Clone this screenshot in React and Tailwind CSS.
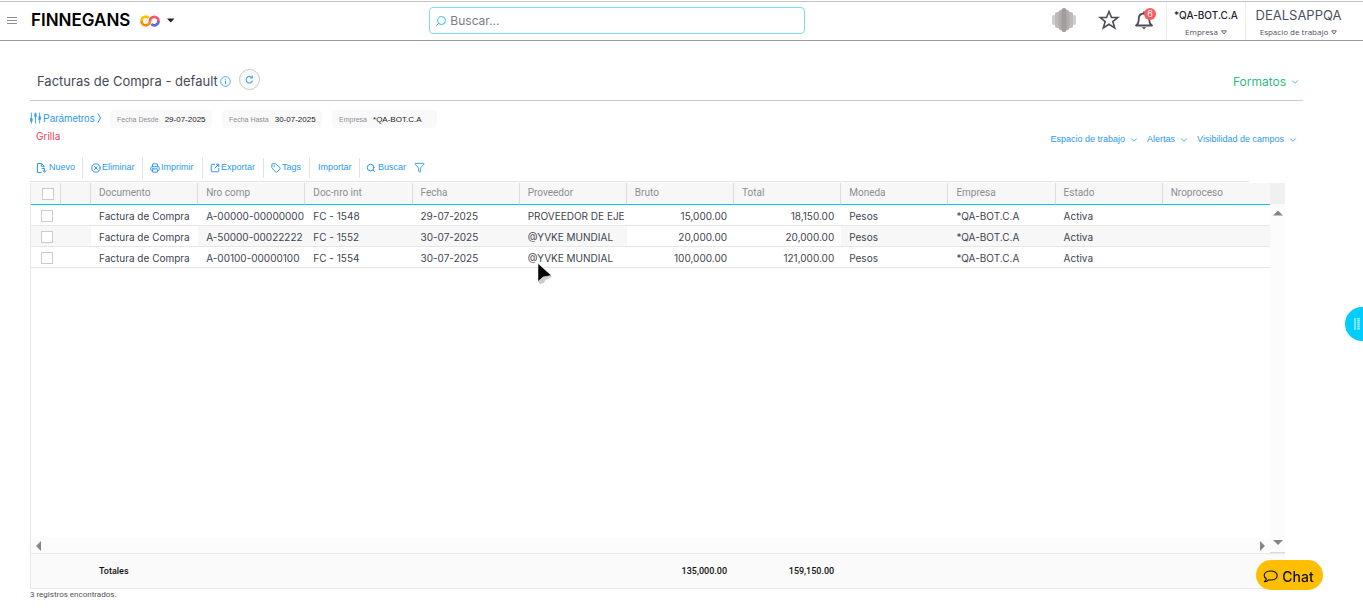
import { ChevronDown, Tag, Filter, Search, Printer, CircleX, SquareArrowOutUpRight } from "lucide-react";

const inter = "font-['Inter','Liberation_Sans',sans-serif]";
const arial = "font-['Liberation_Sans',Arial,sans-serif]";

const columns = ["Documento", "Nro comp", "Doc-nro int", "Fecha", "Proveedor", "Bruto", "Total", "Moneda", "Empresa", "Estado", "Nroproceso"];

const rows = [
  ["Factura de Compra", "A-00000-00000000", "FC - 1548", "29-07-2025", "PROVEEDOR DE EJE", "15,000.00", "18,150.00", "Pesos", "*QA-BOT.C.A", "Activa", ""],
  ["Factura de Compra", "A-50000-00022222", "FC - 1552", "30-07-2025", "@YVKE MUNDIAL", "20,000.00", "20,000.00", "Pesos", "*QA-BOT.C.A", "Activa", ""],
  ["Factura de Compra", "A-00100-00000100", "FC - 1554", "30-07-2025", "@YVKE MUNDIAL", "100,000.00", "121,000.00", "Pesos", "*QA-BOT.C.A", "Activa", ""],
];

const totals = ["Totales", "", "", "", "", "135,000.00", "159,150.00", "", "", "", ""];
const isAmount = (i) => i === 5 || i === 6;
const isPlain = (i) => i === 0 || isAmount(i);

function Columns() {
  return (
    <colgroup>
      <col className="w-[30px]" />
      <col className="w-[30px]" />
      {columns.map((c) => <col key={c} />)}
    </colgroup>
  );
}

function Check({ label }) {
  return <input type="checkbox" aria-label={label} className="block size-3 appearance-none border border-[#c9cbd0] bg-white" />;
}

function Logo() {
  return (
    <svg viewBox="0 0 40 24" className="h-3 w-5" fill="none" strokeWidth="5.500" aria-hidden="true">
      <path d="M17.500 6A8.500 8.500 0 0 0 3 12" stroke="#ffc400" />
      <path d="M3 12A8.500 8.500 0 0 0 20 12" stroke="#ff8a00" />
      <path d="M20 12A8.500 8.500 0 0 1 37 12" stroke="#f4596b" />
      <path d="M37 12A8.500 8.500 0 0 1 22.500 18" stroke="#6467d8" />
    </svg>
  );
}

function Avatar() {
  return (
    <svg viewBox="0 0 24 24" className="size-6" aria-hidden="true">
      <rect x="0" y="7" width="4.500" height="10" rx="2.200" fill="#cfcdcc" />
      <rect x="19.500" y="7" width="4.500" height="10" rx="2.200" fill="#cfcdcc" />
      <rect x="3" y="4" width="5" height="16" rx="2.500" fill="#bdbab9" />
      <rect x="16" y="4" width="5" height="16" rx="2.500" fill="#bdbab9" />
      <rect x="6.500" y="2" width="5" height="20" rx="2.500" fill="#b0adac" />
      <rect x="12.500" y="2" width="5" height="20" rx="2.500" fill="#b0adac" />
      <rect x="9.500" y="0" width="5" height="24" rx="2.500" fill="#a19e9d" />
    </svg>
  );
}

function StarIcon() {
  return (
    <svg viewBox="0 0 22 22" className="size-[22px]" fill="none" stroke="currentColor" strokeWidth="1.600" strokeLinejoin="miter" aria-hidden="true">
      <path d="M11 2.500l2.500 6h6.300l-5 4.100 1.900 6.400L11 15.300 5.300 19l1.900-6.400-5-4.100h6.300z" />
    </svg>
  );
}

function BellIcon() {
  return (
    <svg viewBox="0 0 20 20" className="size-5" fill="none" stroke="currentColor" strokeWidth="1.800" aria-hidden="true">
      <path d="M2 15.500h16c-2-1.500-2.700-2.500-2.700-5V9c0-3.200-2-5.500-5.300-5.500S4.700 5.800 4.700 9v1.500c0 2.500-.7 3.500-2.700 5zM10 1.500v2" strokeLinejoin="round" />
      <path d="M7.800 17.200h4.400L10 19.500z" fill="currentColor" stroke="none" />
    </svg>
  );
}

function InfoIcon() {
  return (
    <svg viewBox="0 0 11 11" className="ml-0.5 size-[11px] text-[#379ff0]" fill="none" stroke="currentColor" aria-hidden="true">
      <circle cx="5.500" cy="5.500" r="4.800" strokeWidth="0.900" />
      <path d="M5.500 4.800v3.400M5.500 2.700v1.100" strokeWidth="1.100" />
    </svg>
  );
}

function RefreshIcon() {
  return (
    <svg viewBox="0 0 10 10" className="size-[9px] text-[#379ff0]" fill="none" stroke="currentColor" strokeWidth="1.200" aria-hidden="true">
      <path d="M8.300 6.300A3.600 3.600 0 1 1 7.200 2.500" />
      <path d="M8.700.3v3.600H5.200z" fill="currentColor" stroke="none" />
    </svg>
  );
}

function NewFileIcon({ className }) {
  return (
    <svg viewBox="0 0 10 10" className={className} fill="none" stroke="currentColor" strokeWidth="1" aria-hidden="true">
      <path d="M4.500 9.500h-4v-9h4l2.500 2.500v1.500M4.300.7V3.300H7" />
      <path d="M4.800 5.500h2.700v3M6 7.300l1.500 2 1.700-2" />
    </svg>
  );
}

function ChatIcon() {
  return (
    <svg viewBox="0 0 15 13" className="h-[13px] w-[15px]" fill="none" stroke="currentColor" strokeWidth="1.200" strokeLinejoin="round" aria-hidden="true">
      <path d="M7.800 1C4 1 1.200 2.900 1.200 5.400c0 1.400.9 2.600 2.200 3.400-.1 1.200-.9 2.200-2 2.900 1.900 0 3.300-.7 4.300-1.900.7.100 1.400.2 2.100.2 3.700 0 6.400-2 6.400-4.600S11.500 1 7.800 1z" />
    </svg>
  );
}

function SmallTriangle() {
  return (
    <svg viewBox="0 0 6 5" className="h-[5px] w-1.5" fill="none" stroke="#555b66" strokeWidth="0.900" aria-hidden="true">
      <path d="M.6.8h4.800L3 4z" />
    </svg>
  );
}

function Sliders() {
  return (
    <svg viewBox="0 0 12 12" className="h-3 w-[11px]" stroke="#379ff0" strokeWidth="1" aria-hidden="true">
      <path d="M1.500 0v12M6 0v12M10.500 0v12" />
      <path d="M1.500 7v2M6 2v2M10.500 5v2" strokeWidth="2.600" strokeLinecap="round" />
    </svg>
  );
}

function Arrow({ d }) {
  return (
    <svg viewBox="0 0 10 10" className="size-2.5" fill="#858585" aria-hidden="true">
      <path d={d} />
    </svg>
  );
}

function Account({ name, label, className }) {
  return (
    <button type="button" className={`flex flex-col items-center border-l border-[#ececec] pt-1.5 ${className}`}>
      {name}
      <span className="mt-[5px] flex items-center gap-[3px] font-['Open_Sans',sans-serif] text-[8px] leading-[10px] font-normal text-[#4b5160]">
        {label}
        <SmallTriangle />
      </span>
    </button>
  );
}

function Header() {
  return (
    <header className="mt-px flex h-10 border-t border-b border-t-[#c4c4c4] border-b-[#9a9aa5] bg-white">
      <div className="flex w-[31.5%] items-center pb-px pl-[7px]">
        <button type="button" aria-label="Menú" className="flex w-2.5 flex-col gap-0.5">
          <span className="h-px bg-[#8c8f98]" />
          <span className="h-px bg-[#8c8f98]" />
          <span className="h-px bg-[#8c8f98]" />
        </button>
        <button type="button" className="ml-3.5 flex items-center text-[17px] font-semibold text-black">
          <span className="w-[109px] text-left">FINNEGANS</span>
          <Logo />
          <svg viewBox="0 0 8 5" className="ml-[7px] h-[5px] w-2" aria-hidden="true"><path d="M0 .5h7.500L3.700 4.500z" fill="#222" /></svg>
        </button>
      </div>
      <div className="mt-[5px] flex h-[27px] w-[376px] items-center gap-[3px] rounded border border-[#7edcf9] px-[5px]">
        <Search className="size-3 -scale-x-100 text-[#2bc3f3]" strokeWidth={2} />
        <input type="text" aria-label="Buscar" placeholder="Buscar..." className="h-5 min-w-0 flex-1 text-[12px] outline-none placeholder:text-[#7a7c86]" />
      </div>
      <div className="flex flex-1 justify-end">
        <div className="flex items-center gap-[22px] pr-3 pb-0.5">
          <Avatar />
          <button type="button" aria-label="Favoritos" className="text-[#4d4d52]"><StarIcon /></button>
          <button type="button" aria-label="Notificaciones" className="relative -ml-2 text-[#4d4d52]">
            <BellIcon />
            <span className="absolute -top-0.5 -right-0.5 flex size-3 items-center justify-center rounded-full bg-[#ff5a5f] text-[9px] text-white">6</span>
          </button>
        </div>
        <Account name={<span className="text-[10px] leading-[14px] font-medium text-[#20242e]">*QA-BOT.C.A</span>} label="Empresa" className="w-[79px]" />
        <Account name={<span className="text-[13px] leading-[14px] text-[#4b5160]">DEALSAPPQA</span>} label="Espacio de trabajo" className="w-[118px] pr-3" />
      </div>
    </header>
  );
}

function Chip({ label, value, className }) {
  return (
    <div className={`flex h-[18px] items-center gap-1.5 rounded-sm bg-[#f9f9f9] pt-0.5 pl-[7px] text-[7px] ${className}`}>
      <span className="text-[#8e8e94]">{label}</span>
      <span className="text-[8px] text-[#222]">{value}</span>
    </div>
  );
}

function MenuLink({ children }) {
  return (
    <button type="button" className="flex items-center gap-1 text-[9px] text-[#2b99ee]">
      {children}
      <ChevronDown className="size-2.5" strokeWidth={2} />
    </button>
  );
}

function Tool({ icon: Icon, children, className }) {
  return (
    <button type="button" className={`flex h-5 items-center border-[#e2e2e2] text-[9px] text-[#2b99ee] ${className}`}>
      {Icon && <Icon className="size-2.5" strokeWidth={2.4} />}
      {children}
    </button>
  );
}

export default function App() {
  return (
    <div className={`flex min-h-screen flex-col bg-white ${inter}`}>
      <Header />
      <main className="flex flex-1 flex-col pr-[60px] pl-[30px]">
        <div className="flex h-[60px] items-center justify-between border-b border-[#c9c9c9] pt-[22px] pl-[7px]">
          <div className="flex items-center">
            <h1 className="text-[13px] text-[#464a58]">Facturas de Compra - default</h1>
            <InfoIcon />
            <button type="button" aria-label="Actualizar" className="mb-1 ml-2 flex size-[21px] items-center justify-center rounded-full border border-[#c9c9c9] bg-[#fafafa]">
              <RefreshIcon />
            </button>
          </div>
          <button type="button" className="flex items-center gap-1 pr-[3px] text-[12px] text-[#31ba84]">
            Formatos
            <ChevronDown className="size-2.5 text-[#379ff0]" strokeWidth={2} />
          </button>
        </div>

        <div className={`mt-[9px] flex h-[18px] items-center ${arial}`}>
          <button type="button" className="flex w-20 items-center gap-0.5 pb-0.5 text-[10px] text-[#2b99ee]">
            <Sliders />
            Parámetros
            <svg viewBox="0 0 5 10" className="h-2.5 w-[5px]" fill="none" stroke="currentColor" aria-hidden="true"><path d="M1 .5l2.500 4.500L1 9.500" /></svg>
          </button>
          <div className="flex gap-2.5">
            <Chip label="Fecha Desde" value="29-07-2025" className="w-[102px]" />
            <Chip label="Fecha Hasta" value="30-07-2025" className="w-[100px]" />
            <Chip label="Empresa" value="*QA-BOT.C.A" className="w-[105px]" />
          </div>
        </div>

        <div className="flex h-[22px] justify-between pr-[5px] pl-1.5">
          <span className="pt-px text-[10px] leading-[14px] text-[#e5454f]">Grilla</span>
          <div className={`flex items-center gap-2 pt-px ${arial}`}>
            <MenuLink>Espacio de trabajo</MenuLink>
            <MenuLink>Alertas</MenuLink>
            <MenuLink>Visibilidad de campos</MenuLink>
          </div>
        </div>

        <div className={`mr-[54px] flex h-8 items-center border-b border-[#e2e2e2] pt-1 ${arial}`}>
          <Tool icon={NewFileIcon} className="w-[53px] gap-0.5 border-r pl-[7px]">Nuevo</Tool>
          <Tool icon={CircleX} className="w-[60px] gap-px border-r pl-2">Eliminar</Tool>
          <Tool icon={Printer} className="w-[60px] gap-px border-r pl-[7px]">Imprimir</Tool>
          <Tool icon={SquareArrowOutUpRight} className="w-[61px] gap-px border-r pl-[7px]">Exportar</Tool>
          <Tool icon={Tag} className="w-[46px] gap-px border-r pl-[7px]">Tags</Tool>
          <Tool className="w-[50px] border-r pl-2">Importar</Tool>
          <Tool icon={Search} className="gap-0.5 pl-1.5">Buscar</Tool>
          <button type="button" aria-label="Filtrar" className="ml-2 text-[#2b99ee]"><Filter className="size-[11px]" strokeWidth={2} /></button>
        </div>

        <section className="mt-px mr-[18px] flex flex-1 flex-col border-l border-[#e8e8e8]">
          <div className="flex flex-1">
            <div className="flex min-w-0 flex-1 flex-col">
              <table className="w-full table-fixed border-separate border-spacing-0 text-[10px] text-[#40444f]">
                <Columns />
                <thead>
                  <tr className="bg-[#f7f7f7] font-['Roboto',sans-serif] leading-[14px] text-[#8b8d94]">
                    <th className="h-[22px] border-r border-b border-r-[#dcdcdc] border-b-[#00c8fa] p-0 pl-[11px]"><Check label="Seleccionar todo" /></th>
                    <th className="border-r border-b border-r-[#dcdcdc] border-b-[#00c8fa] p-0" />
                    {columns.map((c) => (
                      <th key={c} className="border-r border-b border-r-[#dcdcdc] border-b-[#00c8fa] p-0 pb-px pl-2 text-left font-normal last:border-r-0">{c}</th>
                    ))}
                  </tr>
                </thead>
                <tbody>
                  {rows.map((r) => (
                    <tr key={r[1]} className="leading-[14px] even:bg-[#f7f7f7]">
                      <td className="h-[21px] border-b border-[#e6e6e6] p-0 pt-0.5 pl-2.5"><Check label={`Seleccionar ${r[1]}`} /></td>
                      <td className="border-b border-[#e6e6e6] p-0" />
                      {r.map((v, i) => (
                        <td key={i} className={`border-b border-[#e6e6e6] p-0 pt-px whitespace-nowrap ${isAmount(i) ? "pr-[7px] text-right" : "pl-2"} ${isPlain(i) ? "bg-white" : ""}`}>{v}</td>
                      ))}
                    </tr>
                  ))}
                </tbody>
              </table>
              <div className="flex-1" />
              <div className="flex h-[15px] items-center justify-between bg-[#fcfcfc] pr-[3px] pl-0.5">
                <button type="button" aria-label="Desplazar a la izquierda"><Arrow d="M8 0v10L3 5z" /></button>
                <button type="button" aria-label="Desplazar a la derecha"><Arrow d="M3 0v10l5-5z" /></button>
              </div>
            </div>
            <div className="flex w-[15px] flex-col items-center border-b border-[#dcdcdc] bg-[#fcfcfc]">
              <div className="mb-1 h-[21px] w-full bg-[#f0f0f0]" />
              <button type="button" aria-label="Desplazar arriba"><Arrow d="M0 7.500h10L5 2.500z" /></button>
              <div className="flex-1" />
              <button type="button" aria-label="Desplazar abajo" className="mb-[5px]"><Arrow d="M0 3h10L5 8z" /></button>
            </div>
          </div>
          <div className="border-t border-b border-[#e8e8e8] bg-[#fafafa] pr-[15px]">
            <table className="w-full table-fixed border-separate border-spacing-0 font-['Roboto',sans-serif] text-[9px] leading-[14px] font-medium text-[#111]">
              <Columns />
              <tbody>
                <tr className="h-[34px]">
                  <td className="p-0" />
                  <td className="p-0" />
                  {totals.map((v, i) => (
                    <td key={i} className={`p-0 ${isAmount(i) ? "pr-[7px] text-right" : "pl-2"}`}>{v}</td>
                  ))}
                </tr>
              </tbody>
            </table>
          </div>
        </section>
        <p className="h-[19px] font-['Roboto',sans-serif] text-[8px] leading-3 text-[#50525a]">3 registros encontrados.</p>
      </main>

      <svg viewBox="0 0 16 22" className="pointer-events-none absolute top-[263px] left-[537px] h-[22px] w-4" aria-hidden="true">
        <path d="M1 1v18l2.500 2 3.500-1 1.500-3 6.500-3z" fill="#ccc" />
        <path d="M1 .5v18l5-4.500 8.500-1.500z" fill="#000" stroke="#fff" strokeWidth="0.500" />
      </svg>
      <button type="button" aria-label="Abrir panel" className="fixed top-[307px] right-0 flex h-[34px] w-[18px] items-center rounded-l-full bg-[#00cdff] pl-[9px]">
        <svg viewBox="0 0 6 12" className="h-3 w-1.5" stroke="#a5edff" aria-hidden="true">
          <path d="M1 0v12" strokeWidth="1.500" />
          <path d="M4.500 0v12" strokeWidth="2.500" strokeDasharray="1.500 0.500" />
        </svg>
      </button>
      <button type="button" className="fixed right-10 bottom-[18px] flex h-[30px] w-[67px] items-center justify-center gap-1 rounded-full bg-[#ffbf00] pt-0.5 pr-0.5 text-[14px] font-medium text-[#111]">
        <ChatIcon />
        Chat
      </button>
    </div>
  );
}
